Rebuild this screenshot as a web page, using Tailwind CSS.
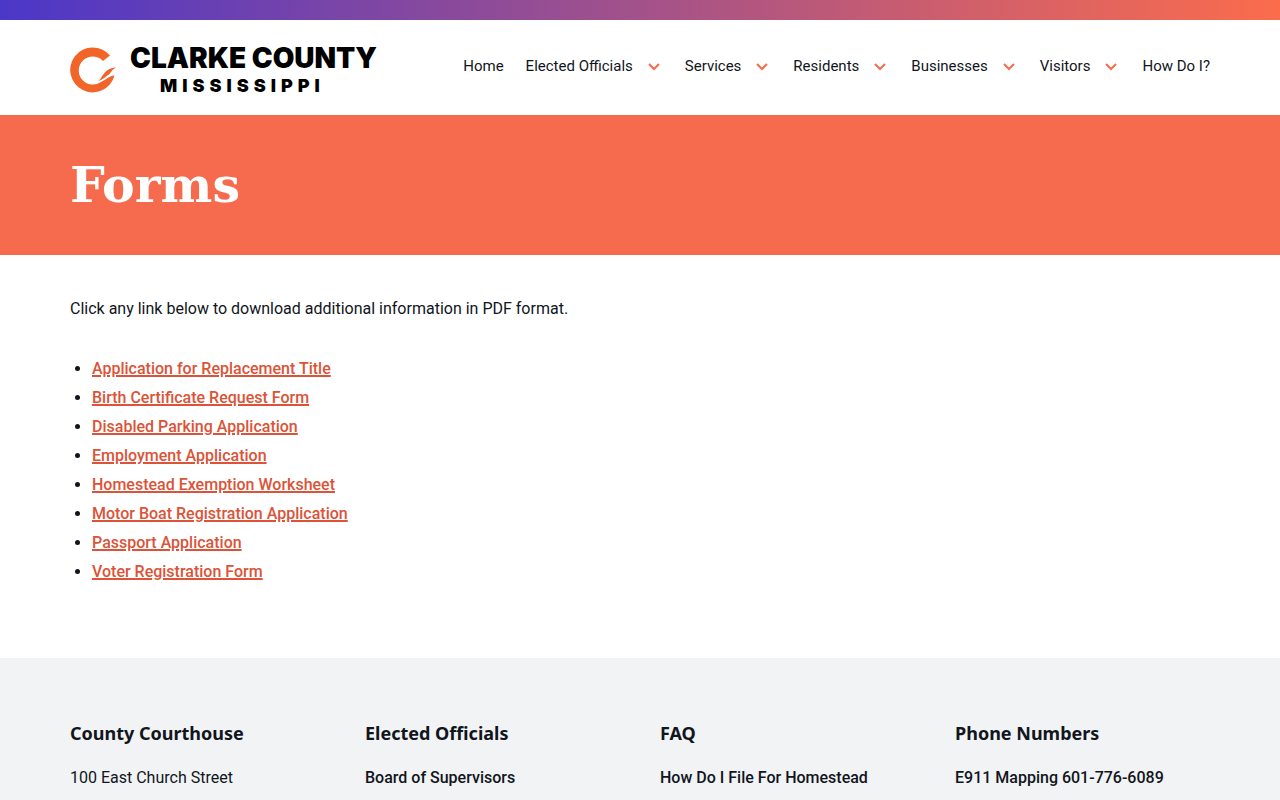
<!DOCTYPE html>
<html lang="en">
<head>
    <meta charset="UTF-8">
    <meta name="viewport" content="width=device-width, initial-scale=1.0">
    <title>Forms - Clarke County, Mississippi</title>
    <script src="https://cdn.jsdelivr.net/npm/@tailwindcss/browser@4"></script>
</head>
<body class="bg-white font-['Roboto',sans-serif] text-base text-[#11151c]">
    <div class="h-5 bg-linear-to-r/srgb from-[#4b37c8] to-[#fb6c4c]"></div>

    <!-- Header -->
    <header class="px-[70px]">
        <div class="flex h-[95px] items-center justify-between">
            <a href="#" class="flex items-center gap-3 pt-1 text-black">
                <svg class="h-12 w-12" viewBox="0 0 48 48" fill="#f26529" aria-hidden="true">
                    <path d="M40 9.500A22.500 22.500 0 1 0 44.500 29.500C40 29 37 33.500 31.500 35.500A14 14 0 1 1 33 15Z"/>
                    <path d="M27 35.500C33 34 32 22 46.500 21.500C41.500 23.500 41.500 26.500 38 29.500C35 32.500 32 34 27 35.500Z"/>
                    <path d="M28 36.500C35 34.500 37 28 44.500 27.500" fill="none" stroke="#fff" stroke-width="1.500"/>
                </svg>
                <span class="flex flex-col font-['Inter',sans-serif] font-black">
                    <span class="text-[28px] leading-8">CLARKE COUNTY</span>
                    <span class="pl-[30px] text-lg leading-6 tracking-[5px]">MISSISSIPPI</span>
                </span>
            </a>

            <nav class="flex items-center gap-[22px] pb-0.5 text-[15px]">
                <a href="#">Home</a>
                <a href="#" class="flex items-center gap-[15px] pr-[3px]">Elected Officials
                    <svg class="w-3" viewBox="0 0 12 8" fill="none" stroke="#f66c4d" stroke-width="2"><path d="M1 1l5 5 5-5"/></svg>
                </a>
                <a href="#" class="flex items-center gap-[15px] pr-[3px]">Services
                    <svg class="w-3" viewBox="0 0 12 8" fill="none" stroke="#f66c4d" stroke-width="2"><path d="M1 1l5 5 5-5"/></svg>
                </a>
                <a href="#" class="flex items-center gap-[15px] pr-[3px]">Residents
                    <svg class="w-3" viewBox="0 0 12 8" fill="none" stroke="#f66c4d" stroke-width="2"><path d="M1 1l5 5 5-5"/></svg>
                </a>
                <a href="#" class="flex items-center gap-[15px] pr-[3px]">Businesses
                    <svg class="w-3" viewBox="0 0 12 8" fill="none" stroke="#f66c4d" stroke-width="2"><path d="M1 1l5 5 5-5"/></svg>
                </a>
                <a href="#" class="flex items-center gap-[15px] pr-[3px]">Visitors
                    <svg class="w-3" viewBox="0 0 12 8" fill="none" stroke="#f66c4d" stroke-width="2"><path d="M1 1l5 5 5-5"/></svg>
                </a>
                <a href="#">How Do I?</a>
            </nav>
        </div>
    </header>

    <!-- Page title -->
    <section class="bg-[#f66b4d] px-[70px] py-10">
        <h1 class="font-['DejaVu_Serif',serif] text-[49px] leading-[60px] font-bold text-white">Forms</h1>
    </section>

    <!-- Content -->
    <main class="px-[70px] pt-10 pb-[72px]">
        <p class="leading-7">Click any link below to download additional information in PDF format.</p>
        <ul class="mt-[31px] list-disc pl-[22px] leading-[29px] font-medium">
            <li><a href="#" class="text-[#dc5337] underline decoration-2">Application for Replacement Title</a></li>
            <li><a href="#" class="text-[#dc5337] underline decoration-2">Birth Certificate Request Form</a></li>
            <li><a href="#" class="text-[#dc5337] underline decoration-2">Disabled Parking Application</a></li>
            <li><a href="#" class="text-[#dc5337] underline decoration-2">Employment Application</a></li>
            <li><a href="#" class="text-[#dc5337] underline decoration-2">Homestead Exemption Worksheet</a></li>
            <li><a href="#" class="text-[#dc5337] underline decoration-2">Motor Boat Registration Application</a></li>
            <li><a href="#" class="text-[#dc5337] underline decoration-2">Passport Application</a></li>
            <li><a href="#" class="text-[#dc5337] underline decoration-2">Voter Registration Form</a></li>
        </ul>
    </main>

    <!-- Footer -->
    <footer class="grid grid-cols-4 gap-10 bg-[#f1f3f5] px-[70px] pt-[60px] pb-10">
        <div>
            <h2 class="mb-4 font-['Noto_Sans',sans-serif] text-lg leading-[30px] font-bold">County Courthouse</h2>
            <p class="leading-7">100 East Church Street</p>
        </div>
        <div>
            <h2 class="mb-4 font-['Noto_Sans',sans-serif] text-lg leading-[30px] font-bold">Elected Officials</h2>
            <a href="#" class="block leading-7 font-medium">Board of Supervisors</a>
        </div>
        <div>
            <h2 class="mb-4 font-['Noto_Sans',sans-serif] text-lg leading-[30px] font-bold">FAQ</h2>
            <a href="#" class="block leading-7 font-medium">How Do I File For Homestead</a>
        </div>
        <div>
            <h2 class="mb-4 font-['Noto_Sans',sans-serif] text-lg leading-[30px] font-bold">Phone Numbers</h2>
            <a href="#" class="block leading-7 font-medium">E911 Mapping 601-776-6089</a>
        </div>
    </footer>
</body>
</html>
